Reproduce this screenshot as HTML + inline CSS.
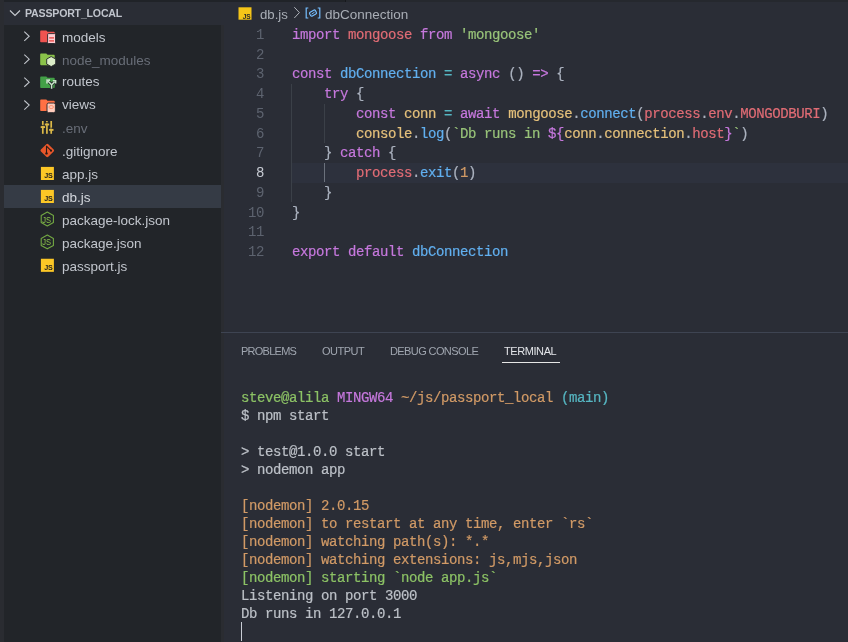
<!DOCTYPE html>
<html><head><meta charset="utf-8">
<style>
*{margin:0;padding:0;box-sizing:border-box}
html,body{width:848px;height:642px;overflow:hidden;background:#2a2d36}
body{position:relative;font-family:"Liberation Sans",sans-serif}
.abs{position:absolute}
#topstrip{left:0;top:0;width:848px;height:2px;background:#202328}
#leftstrip{left:0;top:0;width:4px;height:642px;background:#2a2c31}
#sidebar{left:4px;top:24.6px;width:217px;height:618px;background:#222529}
#sbhead{left:4px;top:2px;width:217px;height:22.6px;background:#2a2d35}
.row{position:absolute;left:4px;width:217px;height:22.85px}
.row.sel{background:#353b45}
.lbl{position:absolute;left:62px;top:0;margin-top:1.7px;line-height:22.85px;font-size:13.5px;color:#c2c6cd;white-space:nowrap}
.lbl.dim{color:#686d77}
.chev{position:absolute;left:19px;top:6px;width:8px;height:11px}
.ico{position:absolute;left:36px;top:5px;width:16px;height:13px}
.code{-webkit-text-stroke:0.2px;position:absolute;left:292px;font-family:"Liberation Mono",monospace;font-size:14px;letter-spacing:-0.4px;line-height:19.7px;height:19.7px;white-space:pre;color:#abb2bf}
.ln{position:absolute;left:224px;width:40px;text-align:right;font-family:"Liberation Mono",monospace;font-size:14px;letter-spacing:-0.4px;line-height:19.7px;color:#5d636f}
.k{color:#c678dd}.r{color:#e06c75}.s{color:#98c379}.b{color:#61afef}.y{color:#e5c07b}.c{color:#56b6c2}.o{color:#d19a66}.p{color:#abb2bf}
.tab{position:absolute;top:339px;font-size:11px;line-height:24px;color:#a0a6b0;white-space:nowrap;letter-spacing:-0.6px}
.term{-webkit-text-stroke:0.2px;position:absolute;left:241px;font-family:"Liberation Mono",monospace;font-size:14px;letter-spacing:-0.4px;line-height:18px;white-space:pre;color:#bcc0c7}
.tg{color:#8cc265}.tp{color:#c678dd}.ty{color:#d19a66}.tc{color:#56b6c2}
</style></head><body><div id="wrap" style="position:absolute;left:0;top:0;width:848px;height:642px;overflow:hidden;filter:blur(0.35px);will-change:transform">
<div id="topstrip" class="abs"></div>
<div class="abs" style="left:345.5px;top:0;width:503px;height:2px;background:#25282e"></div>
<div class="abs" style="left:344.5px;top:0;width:1px;height:2px;background:#16181c"></div>
<div id="leftstrip" class="abs"></div>
<div id="sbhead" class="abs"></div>
<div id="sidebar" class="abs"></div>
<div class="abs" style="left:221px;top:24.6px;width:3.4px;height:618px;background:#2a2c31"></div>

<!-- sidebar header -->
<svg class="abs" style="left:9px;top:9px" width="12" height="8" viewBox="0 0 12 8"><path d="M1 1.5 L6 6.5 L11 1.5" fill="none" stroke="#c5c8ce" stroke-width="1.2"/></svg>
<div class="abs" style="left:25px;top:1.8px;line-height:22.6px;font-size:10.6px;font-weight:bold;color:#c0c4cc;letter-spacing:-0.2px">PASSPORT_LOCAL</div>

<!-- sidebar rows -->
<div class="abs" style="left:4px;top:185.1px;width:217px;height:22.7px;background:#353b45"></div>
<div class="lbl" style="top:25.00px">models</div>
<div class="lbl dim" style="top:47.95px">node_modules</div>
<div class="lbl" style="top:69.70px">routes</div>
<div class="lbl" style="top:92.65px">views</div>
<div class="lbl dim" style="top:116.80px">.env</div>
<div class="lbl" style="top:139.75px">.gitignore</div>
<div class="lbl" style="top:162.70px">app.js</div>
<div class="lbl" style="top:185.65px;color:#d4d8de">db.js</div>
<div class="lbl" style="top:208.60px">package-lock.json</div>
<div class="lbl" style="top:231.55px">package.json</div>
<div class="lbl" style="top:254.50px">passport.js</div>
<svg class="abs" style="left:0;top:0" width="221" height="300" viewBox="0 0 221 300">
<path d="M24.3 31.65 L29.2 36.25 L24.3 40.85" fill="none" stroke="#c2c6cc" stroke-width="1.05"/>
<path d="M24.3 54.60 L29.2 59.20 L24.3 63.80" fill="none" stroke="#c2c6cc" stroke-width="1.05"/>
<path d="M24.3 77.55 L29.2 82.15 L24.3 86.75" fill="none" stroke="#c2c6cc" stroke-width="1.05"/>
<path d="M24.3 100.50 L29.2 105.10 L24.3 109.70" fill="none" stroke="#c2c6cc" stroke-width="1.05"/>
<path d="M40.2 31.40 Q40.2 30.60 41 30.60 H46.3 L47.5 31.80 H53.9 Q54.7 31.80 54.7 32.60 V41.40 Q54.7 42.20 53.9 42.20 H41 Q40.2 42.20 40.2 41.40 Z" fill="#ef5350"/>
<rect x="47.6" y="33.60" width="7.9" height="9.9" rx="0.9" fill="#ffcdd2" stroke="#222529" stroke-width="0.9"/>
<rect x="49.2" y="37.30" width="4.8" height="1.2" fill="#e53935"/>
<rect x="49.2" y="40.30" width="4.8" height="1.2" fill="#e53935"/>
<path d="M40.2 54.35 Q40.2 53.55 41 53.55 H46.3 L47.5 54.75 H53.9 Q54.7 54.75 54.7 55.55 V64.35 Q54.7 65.15 53.9 65.15 H41 Q40.2 65.15 40.2 64.35 Z" fill="#8bc34a"/>
<path d="M51.20 56.55 L55.70 59.05 L55.70 64.05 L51.20 66.55 L46.70 64.05 L46.70 59.05 Z" fill="#dcedc8" stroke="#222529" stroke-width="0.9"/>
<path d="M40.2 77.30 Q40.2 76.50 41 76.50 H46.3 L47.5 77.70 H53.9 Q54.7 77.70 54.7 78.50 V87.30 Q54.7 88.10 53.9 88.10 H41 Q40.2 88.10 40.2 87.30 Z" fill="#43a047"/>
<path d="M47.6 80.70 L51.6 84.70 V88.50 M51.6 84.70 L54.6 81.70" fill="none" stroke="#222529" stroke-width="3.2" stroke-linecap="round"/>
<path d="M47.6 80.70 L51.6 84.70 V88.80 M51.6 84.70 L54.6 81.70" fill="none" stroke="#c8e6c9" stroke-width="1.5"/>
<path d="M47 83.40 V80.10 H50" fill="none" stroke="#c8e6c9" stroke-width="1.6"/>
<path d="M52.8 80.70 H55.6 V83.50" fill="none" stroke="#c8e6c9" stroke-width="1.6"/>
<path d="M40.2 100.25 Q40.2 99.45 41 99.45 H46.3 L47.5 100.65 H53.9 Q54.7 100.65 54.7 101.45 V110.25 Q54.7 111.05 53.9 111.05 H41 Q40.2 111.05 40.2 110.25 Z" fill="#ff7043"/>
<rect x="47" y="103.05" width="8.4" height="9.6" rx="1.6" fill="#ffccbc" stroke="#222529" stroke-width="0.9"/>
<ellipse cx="51.2" cy="107.05" rx="2.3" ry="1.5" fill="none" stroke="#ff8a65" stroke-width="0.9"/>
<rect x="41.95" y="121" width="1.7" height="12.8" fill="#dcb948"/>
<rect x="40.70" y="126.15" width="4.4" height="1.9" fill="#dcb948"/>
<rect x="41.95" y="124.90" width="1.9" height="0.9" fill="#222529"/>
<rect x="46.05" y="121" width="1.7" height="12.8" fill="#dcb948"/>
<rect x="44.80" y="123.55" width="4.4" height="1.9" fill="#dcb948"/>
<rect x="46.05" y="122.30" width="1.9" height="0.9" fill="#222529"/>
<rect x="50.35" y="121" width="1.7" height="12.8" fill="#dcb948"/>
<rect x="49.10" y="128.95" width="4.4" height="1.9" fill="#dcb948"/>
<rect x="50.35" y="127.70" width="1.9" height="0.9" fill="#222529"/>
<rect x="42.1" y="145.3" width="10.4" height="10.4" rx="1.4" transform="rotate(45 47.3 150.5)" fill="#e8572b"/>
<path d="M46.5 146.2 V153.2 M46.2 145.9 L51 150.7" fill="none" stroke="#2a1a14" stroke-width="1.1"/>
<circle cx="46.5" cy="153.4" r="1.2" fill="#2a1a14"/><circle cx="51" cy="150.7" r="1.1" fill="#2a1a14"/>
<rect x="40.9" y="166.90" width="13" height="13.1" fill="#fcc726"/>
<text x="52.6" y="178.20" font-family="Liberation Sans" font-size="7.2" font-weight="bold" fill="#1e1e1e" text-anchor="end" letter-spacing="-0.2">JS</text>
<rect x="40.9" y="189.90" width="13" height="13.1" fill="#fcc726"/>
<text x="52.6" y="201.20" font-family="Liberation Sans" font-size="7.2" font-weight="bold" fill="#1e1e1e" text-anchor="end" letter-spacing="-0.2">JS</text>
<rect x="40.9" y="258.75" width="13" height="13.1" fill="#fcc726"/>
<text x="52.6" y="270.05" font-family="Liberation Sans" font-size="7.2" font-weight="bold" fill="#1e1e1e" text-anchor="end" letter-spacing="-0.2">JS</text>
<path d="M47.30 212.10 L53.40 215.55 L53.40 222.45 L47.30 225.90 L41.20 222.45 L41.20 215.55 Z" fill="none" stroke="#73a843" stroke-width="1.1" stroke-linejoin="round"/>
<text x="42.2" y="222.50" font-family="Liberation Sans" font-size="8.2" fill="#8bc34a" textLength="8.8" lengthAdjust="spacingAndGlyphs">JS</text>
<path d="M47.30 235.05 L53.40 238.50 L53.40 245.40 L47.30 248.85 L41.20 245.40 L41.20 238.50 Z" fill="none" stroke="#73a843" stroke-width="1.1" stroke-linejoin="round"/>
<text x="42.2" y="245.45" font-family="Liberation Sans" font-size="8.2" fill="#8bc34a" textLength="8.8" lengthAdjust="spacingAndGlyphs">JS</text>
</svg>

<!-- breadcrumbs -->
<svg class="abs" style="left:238px;top:7px" width="14" height="13" viewBox="0 0 14 13"><rect x="0.5" y="0.3" width="13" height="12.4" fill="#f5c518"/><text x="12.7" y="11.6" font-family="Liberation Sans" font-size="6.5" font-weight="bold" fill="#2a2a2a" text-anchor="end">JS</text></svg>
<div class="abs" style="left:260px;top:3.5px;line-height:22.6px;font-size:13.2px;color:#a9aeb6">db.js</div>
<svg class="abs" style="left:293px;top:6px" width="8" height="13" viewBox="0 0 8 13"><path d="M1.3 1.2 L6.4 6.6 L1.3 12" fill="none" stroke="#b0b4bb" stroke-width="1"/></svg>
<svg class="abs" style="left:304px;top:7px" width="18" height="13" viewBox="0 0 18 13"><path d="M4.3 1 H2.2 V11 H4.3 M13.7 1 H15.8 V11 H13.7" fill="none" stroke="#75beff" stroke-width="1.2"/><rect x="5.7" y="3.9" width="6.6" height="4.4" rx="1.3" transform="rotate(-30 9 6.1)" fill="none" stroke="#75beff" stroke-width="1.2"/><path d="M7.6 7.2 L10.6 5.1" stroke="#75beff" stroke-width="1"/></svg>
<div class="abs" style="left:325px;top:3.5px;line-height:22.6px;font-size:13.5px;color:#a9aeb6">dbConnection</div>

<!-- editor line highlight -->
<div class="abs" style="left:292px;top:163.2px;width:556px;height:19.6px;background:#2d313d"></div>
<!-- indent guides -->
<div class="abs" style="left:291px;top:83.5px;width:1px;height:118px;background:#3b4048"></div>
<div class="abs" style="left:324px;top:103.9px;width:1px;height:39.4px;background:#3b4048"></div>
<div class="abs" style="left:324px;top:162.8px;width:1px;height:19.7px;background:#6b717c"></div>

<!-- line numbers -->
<div class="ln" style="top:26.30px">1</div>
<div class="ln" style="top:46.00px">2</div>
<div class="ln" style="top:64.80px">3</div>
<div class="ln" style="top:85.40px">4</div>
<div class="ln" style="top:105.10px">5</div>
<div class="ln" style="top:124.80px">6</div>
<div class="ln" style="top:143.60px">7</div>
<div class="ln" style="top:164.20px;color:#c8ccd4">8</div>
<div class="ln" style="top:183.90px">9</div>
<div class="ln" style="top:203.60px">10</div>
<div class="ln" style="top:223.30px">11</div>
<div class="ln" style="top:243.00px">12</div>

<!-- code -->
<div class="code" style="top:26.30px"><span class="k">import</span> <span class="r">mongoose</span> <span class="k">from</span> <span class="s">'mongoose'</span></div>
<div class="code" style="top:64.80px"><span class="k">const</span> <span class="b">dbConnection</span> <span class="c">=</span> <span class="k">async</span> () <span class="k">=&gt;</span> {</div>
<div class="code" style="top:85.40px">    <span class="k">try</span> {</div>
<div class="code" style="top:105.10px">        <span class="k">const</span> <span class="y">conn</span> <span class="c">=</span> <span class="k">await</span> <span class="y">mongoose</span>.<span class="b">connect</span>(<span class="r">process</span>.<span class="r">env</span>.<span class="r">MONGODBURI</span>)</div>
<div class="code" style="top:124.80px">        <span class="y">console</span>.<span class="b">log</span>(<span class="s">`Db runs in </span><span class="k">${</span><span class="y">conn</span>.<span class="y">connection</span>.<span class="r">host</span><span class="k">}</span><span class="s">`</span>)</div>
<div class="code" style="top:143.60px">    } <span class="k">catch</span> {</div>
<div class="code" style="top:164.20px">        <span class="r">process</span>.<span class="b">exit</span>(<span class="o">1</span>)</div>
<div class="code" style="top:183.90px">    }</div>
<div class="code" style="top:203.60px">}</div>
<div class="code" style="top:243.00px"><span class="k">export</span> <span class="k">default</span> <span class="b">dbConnection</span></div>

<!-- panel -->
<div class="abs" style="left:221px;top:332px;width:627px;height:1px;background:#3e4452"></div>
<div class="tab" style="left:241px;letter-spacing:-0.75px">PROBLEMS</div>
<div class="tab" style="left:322px;letter-spacing:-0.5px">OUTPUT</div>
<div class="tab" style="left:390px;letter-spacing:-0.6px">DEBUG CONSOLE</div>
<div class="tab" style="left:504px;color:#e2e4e8;letter-spacing:-0.42px">TERMINAL</div>
<div class="abs" style="left:502px;top:361.5px;width:58px;height:1.3px;background:#e6e6e6"></div>

<!-- terminal -->
<div class="term" style="top:389.30px"><span class="tg">steve@alila</span> <span class="tp">MINGW64</span> <span class="ty">~/js/passport_local</span> <span class="tc">(main)</span></div>
<div class="term" style="top:407.30px">$ npm start</div>
<div class="term" style="top:443.30px">&gt; test@1.0.0 start</div>
<div class="term" style="top:461.30px">&gt; nodemon app</div>
<div class="term ty" style="top:497.30px">[nodemon] 2.0.15</div>
<div class="term ty" style="top:515.30px">[nodemon] to restart at any time, enter `rs`</div>
<div class="term ty" style="top:533.30px">[nodemon] watching path(s): *.*</div>
<div class="term ty" style="top:551.30px">[nodemon] watching extensions: js,mjs,json</div>
<div class="term tg" style="top:569.30px">[nodemon] starting `node app.js`</div>
<div class="term" style="top:587.30px">Listening on port 3000</div>
<div class="term" style="top:605.30px">Db runs in 127.0.0.1</div>
<div class="abs" style="left:241px;top:622px;width:1px;height:19px;background:#c8ccd4"></div>
</div></body></html>
